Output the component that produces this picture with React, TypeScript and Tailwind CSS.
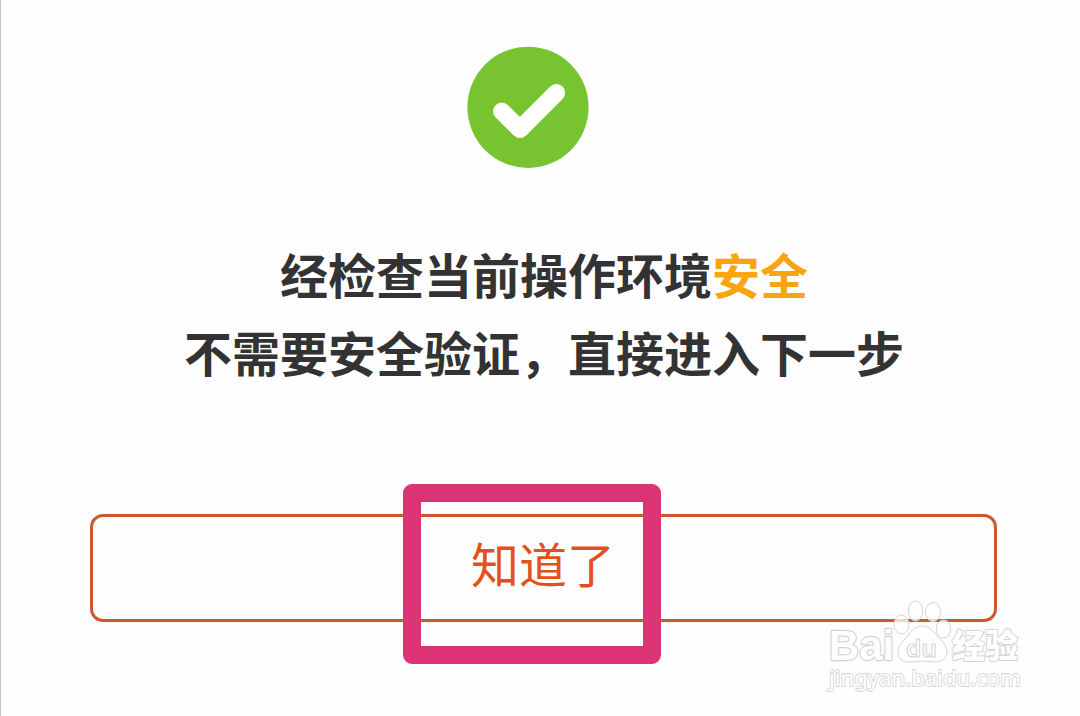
function CheckIcon() {
  return (
    <svg className="h-[122px] w-[122px]" viewBox="0 0 122 122" fill="none">
      <circle cx="61" cy="61.3" r="60.6" fill="#78c430" />
      <path
        d="M34.8 65.3 53 83.2 89.4 46.8"
        stroke="#fff"
        strokeWidth="17.5"
        strokeLinecap="round"
        strokeLinejoin="round"
      />
    </svg>
  );
}

function Watermark() {
  return (
    <svg
      className="absolute left-[819px] top-[590px] h-[110px] w-[220px]"
      viewBox="820 590 220 110"
      fill="#fff"
      stroke="#d4d4d4"
      strokeWidth="1"
      strokeLinejoin="round"
    >
      <g fillOpacity="0.75">
        <ellipse cx="901.5" cy="624.5" rx="7.5" ry="9.5" />
        <ellipse cx="915.5" cy="611" rx="7.3" ry="10" />
        <ellipse cx="933" cy="612" rx="7.5" ry="9.5" />
        <ellipse cx="943.5" cy="629" rx="7.2" ry="9" />
      </g>
      <path d="M922 626c-8 0-11 6-15 11-4 4-9 8-9 15 0 7 5 10 11 10 5 0 8-1 13-1s9 1 14 1c6 0 11-4 11-10 0-7-5-11-9-15-4-5-8-11-16-11z" />
      <text x="829" y="660" fontSize="43" fontWeight="700" fontFamily="'Liberation Sans', Arial, sans-serif" strokeWidth="2.4" paintOrder="stroke" textLength="65" lengthAdjust="spacingAndGlyphs">Bai</text>
      <text x="906" y="657" fontSize="24" fontWeight="600" fontFamily="'Noto Sans', sans-serif" textLength="31" lengthAdjust="spacingAndGlyphs">du</text>
      <text x="952" y="658" fontSize="33" fontWeight="900" fontFamily="'Noto Sans CJK SC', sans-serif" strokeWidth="2" paintOrder="stroke">经验</text>
      <text x="829" y="686" fontSize="22" fontFamily="'Noto Sans', sans-serif" stroke="#d6d6d6" strokeWidth="1.8" paintOrder="stroke" textLength="192" lengthAdjust="spacingAndGlyphs">jingyan.baidu.com</text>
    </svg>
  );
}

export default function App() {
  return (
    <div className="relative flex h-[716px] w-[1080px] flex-col overflow-hidden border-l border-[#c6c6c6] bg-[#fefefe] font-['Noto_Sans_CJK_SC',sans-serif]">
      <div className="ml-[466px] mt-[46px]">
        <CheckIcon />
      </div>

      <div className="mt-[66px] w-[1086px] text-center text-[48px] font-bold leading-[78px] text-[#333]">
        <p>
          经检查当前操作环境<span className="text-[#faa510]">安全</span>
        </p>
        <p>不需要安全验证，直接进入下一步</p>
      </div>

      <button className="ml-[89px] mt-[124px] flex h-[108px] w-[907px] shrink-0 items-center justify-center rounded-[13px] border-3 border-[#cb5b2a] pb-3 pr-px text-[48px] leading-none text-[#e2511a]">
        知道了
      </button>

      {/* marca sobre el botón */}
      <div className="absolute left-[402px] top-[484px] h-[180px] w-[258px] rounded-[9px] border-18 border-[#db3374]" />

      <Watermark />
    </div>
  );
}
